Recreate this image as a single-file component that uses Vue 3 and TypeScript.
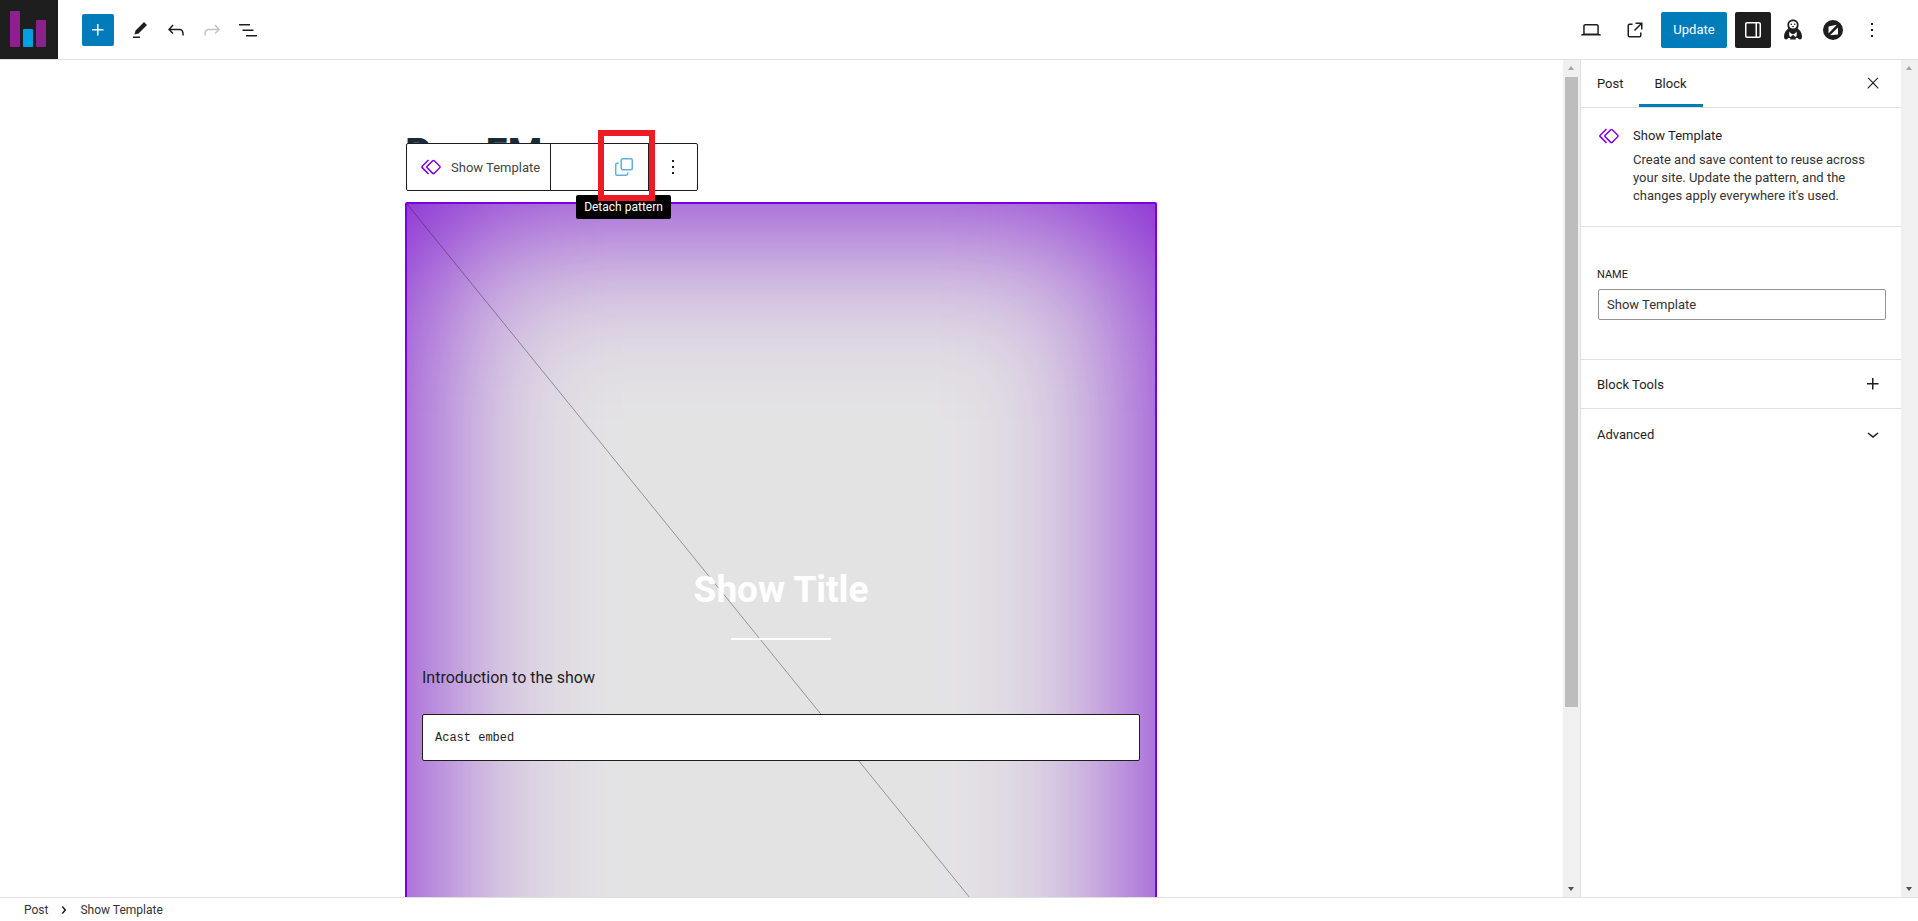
<template>
  <div class="editor">
    <header class="topbar">
      <div class="left">
        <div class="logo">
          <span class="bar bar-a"></span>
          <span class="bar bar-b"></span>
          <span class="bar bar-c"></span>
        </div>
        <button class="add">
          <svg viewBox="0 0 24 24" width="24" height="24"><path :d="icons.plus" /></svg>
        </button>
        <div class="tools">
          <button v-for="tool in leftTools" :key="tool.name" class="icon-btn" :class="{ off: tool.off }">
            <svg viewBox="0 0 24 24" width="24" height="24"><path :d="tool.d" /></svg>
          </button>
        </div>
      </div>
      <div class="right">
        <button class="icon-btn">
          <svg viewBox="0 0 24 24" width="24" height="24"><path :d="icons.laptop" /></svg>
        </button>
        <button class="icon-btn">
          <svg viewBox="0 0 24 24" width="24" height="24"><path :d="icons.external" /></svg>
        </button>
        <button class="update">Update</button>
        <button class="icon-btn dark">
          <svg viewBox="0 0 24 24" width="24" height="24"><path :d="icons.sidebar" /></svg>
        </button>
        <button class="icon-btn tight">
          <svg viewBox="0 0 24 24" width="24" height="24">
            <path d="M12 1.500c-3.300 0-5.600 2.400-5.600 5.600 0 1.400.3 2.500.9 3.500C5 12.300 3 15 3 18.500c0 1.700.8 3 2 3s1.700-.9 2.300-1.500h2.200c-.3 1-.9 1.500-.9 1.500h6.800s-.6-.5-.9-1.500h2.200c.6.600 1.100 1.500 2.300 1.500s2-1.300 2-3c0-3.500-2-6.200-4.300-7.900.6-1 .9-2.100.9-3.500C17.600 3.900 15.300 1.500 12 1.500Z" />
            <ellipse cx="12" cy="6.800" rx="3.900" ry="3.600" fill="#fff" />
            <circle cx="10.300" cy="6.200" r=".8" />
            <circle cx="13.700" cy="6.200" r=".8" />
            <path d="M10.800 7.900h2.400L12 9.500Z" />
            <path d="M8.500 13.500c1 2 2.200 2.700 3.500 2.700s2.500-.7 3.500-2.700c.5 1.500.4 3.500-.3 5.300h-1.500c.2-.8-.6-1.500-1.700-1.500s-1.900.7-1.700 1.500H8.800c-.7-1.800-.8-3.800-.3-5.300Z" fill="#fff" />
          </svg>
        </button>
        <button class="icon-btn tight">
          <svg viewBox="0 0 24 24" width="24" height="24">
            <circle cx="12" cy="12" r="10" />
            <path d="M7.500 8.500 15.800 6.800 7.500 15.500Z" fill="#fff" />
            <path d="M17 9.500V16.500L9 17.300Z" fill="#fff" />
          </svg>
        </button>
        <button class="icon-btn last">
          <svg viewBox="0 0 24 24" width="24" height="24"><path :d="icons.more" /></svg>
        </button>
      </div>
    </header>

    <div class="body">
      <main class="canvas">
        <div class="canvas-scroll">
          <div class="content">
            <h1 class="post-title">Pop FM</h1>
            <section class="cover">
              <svg class="diagonal" viewBox="0 0 100 100" preserveAspectRatio="none">
                <line x1="0" y1="0" x2="100" y2="100" vector-effect="non-scaling-stroke" />
              </svg>
              <div class="cover-inner">
                <h2 class="show-title">Show Title</h2>
                <hr class="rule" />
                <p class="intro">Introduction to the show</p>
                <div class="embed">Acast embed</div>
              </div>
            </section>

            <div class="block-toolbar">
              <div class="tb-group tb-name">
                <svg class="pattern-icon" viewBox="0 0 24 24" width="24" height="24"><path :d="icons.symbol" /></svg>
                <span>Show Template</span>
              </div>
              <div class="tb-group tb-detach">
                <svg viewBox="0 0 24 24" width="24" height="24">
                  <rect x="9.200" y="3.700" width="11.100" height="11.100" rx="1.500" />
                  <path d="M6.700 8.200H5.200a1.500 1.500 0 0 0-1.500 1.500v9a1.500 1.500 0 0 0 1.500 1.500h9a1.500 1.500 0 0 0 1.500-1.500v-1.200" />
                </svg>
              </div>
              <div class="tb-group tb-more">
                <svg viewBox="0 0 24 24" width="24" height="24"><path :d="icons.more" /></svg>
              </div>
            </div>
            <div class="tooltip">Detach pattern</div>
            <div class="highlight"></div>
          </div>
        </div>
        <div class="scrollbar">
          <span class="arrow up"></span>
          <span class="thumb"></span>
          <span class="arrow down"></span>
        </div>
      </main>

      <aside class="sidebar">
        <div class="panel">
          <div class="tabs">
            <span class="tab">Post</span>
            <span class="tab active">Block</span>
            <svg class="close" viewBox="0 0 24 24" width="18" height="18"><path :d="icons.close" /></svg>
          </div>
          <div class="card">
            <svg class="pattern-icon" viewBox="0 0 24 24" width="24" height="24"><path :d="icons.symbol" /></svg>
            <div>
              <h3>Show Template</h3>
              <p>Create and save content to reuse across your site. Update the pattern, and the changes apply everywhere it's used.</p>
            </div>
          </div>
          <div class="name-section">
            <label>Name</label>
            <input type="text" value="Show Template" />
          </div>
          <div class="row">
            <span>Block Tools</span>
            <svg viewBox="0 0 24 24" width="24" height="24"><path :d="icons.plus" /></svg>
          </div>
          <div class="row plain">
            <span>Advanced</span>
            <svg viewBox="0 0 24 24" width="24" height="24"><path :d="icons.chevronDown" /></svg>
          </div>
        </div>
        <div class="scrollbar empty">
          <span class="arrow up"></span>
          <span class="arrow down"></span>
        </div>
      </aside>
    </div>

    <footer class="crumbs">
      <span>Post</span>
      <svg viewBox="0 0 24 24" width="24" height="24"><path :d="icons.chevronRight" /></svg>
      <span>Show Template</span>
    </footer>
  </div>
</template>

<script setup lang="ts">
const icons = {
  plus: 'M11 12.5V17.5H12.5V12.5H17.5V11H12.5V6H11V11H6V12.5H11Z',
  pencil: 'm19 7-3-3-8.500 8.500-1 4 4-1L19 7Zm-7 11.500H5V20h7v-1.500Z',
  undo: 'M18.300 11.700c-.6-.6-1.400-.9-2.300-.9H6.700l2.900-3.300-1.100-1-4.500 5L8.500 16l1-1-2.700-2.700H16c.5 0 .9.2 1.300.5 1 1 1 3.400 1 4.500v.3h1.500v-.2c0-1.500 0-4.300-1.500-5.700z',
  redo: 'M15.600 6.500l-1.100 1 2.900 3.300H8c-.9 0-1.700.3-2.300.9-1.400 1.500-1.400 4.200-1.400 5.600v.2h1.500v-.3c0-1.100 0-3.500 1-4.500.3-.3.7-.5 1.300-.5h9.200L14.500 15l1.100 1.100 4.600-4.600-4.600-5z',
  list: 'M3 6h11v1.500H3V6Zm3.500 5.500h11V13h-11v-1.500ZM21 17H10v1.500h11V17Z',
  laptop: 'M20.500 16h-.7V8c0-1.100-.9-2-2-2H6.200c-1.100 0-2 .9-2 2v8h-.7c-.8 0-1.500.7-1.500 1.500h20c0-.8-.7-1.500-1.500-1.500zM5.700 8c0-.3.2-.5.5-.5h11.600c.3 0 .5.2.5.5v7.600H5.700V8z',
  external: 'M19.500 4.500h-7V6h4.440l-5.970 5.970 1.060 1.060L18 7.060v4.440h1.500v-7Zm-13 1a2 2 0 0 0-2 2v10a2 2 0 0 0 2 2h10a2 2 0 0 0 2-2v-3H17v3a.5.5 0 0 1-.5.5h-10a.5.5 0 0 1-.5-.5v-10a.5.5 0 0 1 .5-.5h3V5.500h-3Z',
  sidebar: 'M18 4H6c-1.100 0-2 .9-2 2v12c0 1.100.9 2 2 2h12c1.100 0 2-.9 2-2V6c0-1.100-.9-2-2-2zM6 5.500h8.500v13H6c-.3 0-.5-.2-.5-.5V6c0-.3.2-.5.5-.5zm12.500 12.500c0 .3-.2.5-.5.5h-2v-13h2c.3 0 .5.2.5.5v12z',
  more: 'M13 19h-2v-2h2v2zm0-6h-2v-2h2v2zm0-6h-2V5h2v2z',
  close: 'M13 11.800l6.100-6.300-1-1-6.100 6.200-6.100-6.200-1 1 6.100 6.300-6.500 6.700 1 1 6.500-6.600 6.500 6.600 1-1z',
  chevronDown: 'M17.500 11.600L12 16l-5.500-4.400.9-1.200L12 14l4.500-3.600 1 1.200z',
  chevronRight: 'M10.862 8.040L14.280 12.029L10.862 16.017L9.723 15.040L12.305 12.029L9.723 9.017L10.862 8.040Z',
  symbol: 'M21.300 10.800l-5.600-5.600c-.7-.7-1.800-.7-2.500 0l-5.600 5.600c-.7.7-.7 1.800 0 2.500l5.600 5.600c.3.3.8.5 1.200.5s.9-.2 1.200-.5l5.600-5.600c.8-.7.8-1.900.1-2.500zm-1 1.400l-5.600 5.600c-.1.1-.3.1-.4 0l-5.600-5.600c-.1-.1-.1-.3 0-.4l5.600-5.600s.1-.1.2-.1.100 0 .2.100l5.600 5.600c.1.100.1.300 0 .4zm-16.600-.4L10 5.500l-1-1-6.300 6.300c-.7.700-.7 1.800 0 2.500L9 19.500l1.100-1.100-6.300-6.300c-.2 0-.2-.2-.1-.3z',
}

const leftTools = [
  { name: 'edit', d: icons.pencil, off: false },
  { name: 'undo', d: icons.undo, off: false },
  { name: 'redo', d: icons.redo, off: true },
  { name: 'list', d: icons.list, off: false },
]
</script>

<style>
html,
body {
  margin: 0;
  height: 100%;
  overflow: hidden;
  background: #fff;
}
</style>

<style scoped>
.editor {
  display: flex;
  flex-direction: column;
  height: 921px;
  font-family: Roboto, "Noto Sans", sans-serif;
  font-size: 13px;
  color: #1e1e1e;
}

button {
  border: none;
  background: none;
  padding: 0;
  font-family: inherit;
}

svg {
  fill: currentColor;
  display: block;
}

/* top bar */
.topbar {
  display: flex;
  justify-content: space-between;
  align-items: center;
  height: 60px;
  flex: none;
  box-sizing: border-box;
  border-bottom: 1px solid #e0e0e0;
}

.left,
.right,
.tools {
  display: flex;
  align-items: center;
}

.logo {
  display: flex;
  align-items: flex-end;
  gap: 3px;
  box-sizing: border-box;
  width: 58px;
  height: 59px;
  padding: 0 12px 12px 10px;
  background: #1e1e1e;
}

.bar {
  width: 10px;
  border-radius: 1px;
  background: #8e1f8f;
}

.bar-a {
  height: 36px;
}

.bar-b {
  height: 18px;
  background: #00a0e3;
}

.bar-c {
  height: 27px;
}

.add {
  display: flex;
  align-items: center;
  justify-content: center;
  width: 32px;
  height: 32px;
  margin: 0 8px 0 24px;
  border-radius: 2px;
  background: #007cba;
  color: #fff;
}

.icon-btn {
  display: flex;
  align-items: center;
  justify-content: center;
  width: 36px;
  height: 36px;
  border-radius: 2px;
  color: #1e1e1e;
}

.icon-btn.off {
  color: #c4c4c4;
}

.icon-btn.dark {
  background: #1e1e1e;
  color: #fff;
  margin-right: 4px;
}

.icon-btn.tight {
  margin-right: 4px;
}

.icon-btn.last {
  margin: 0 28px 0 -1px;
}

.right .icon-btn:first-child,
.right .icon-btn:nth-child(2),
.update {
  margin-right: 8px;
}

.update {
  width: 66px;
  height: 36px;
  border-radius: 2px;
  background: #007cba;
  color: #fff;
  font-size: 13px;
}

/* main area */
.body {
  display: flex;
  flex: 1;
  min-height: 0;
}

.canvas {
  display: flex;
  flex: 1;
  min-width: 0;
  border-right: 1px solid #e0e0e0;
}

.canvas-scroll {
  flex: 1;
  min-width: 0;
  overflow: hidden;
}

.content {
  position: relative;
  width: 752px;
  margin-left: 405px;
  padding-top: 72px;
}

.post-title {
  margin: 0 0 8px;
  height: 62px;
  font-size: 40px;
  line-height: 44px;
  font-weight: 700;
  color: #1a2b38;
}

.cover {
  position: relative;
  box-sizing: border-box;
  height: 926px;
  border: 2px solid #7a00df;
  border-radius: 2px;
  background: #e4e3e4;
  box-shadow: inset 0 0 180px #7400d0;
}

.diagonal {
  position: absolute;
  inset: 0;
  width: 100%;
  height: 100%;
}

.diagonal line {
  stroke: #1e1e1e;
  stroke-opacity: 0.4;
  stroke-width: 1;
}

.cover-inner {
  position: relative;
  padding: 361px 15px 0;
}

.show-title {
  margin: 0;
  text-align: center;
  color: #fff;
  font-size: 37px;
  line-height: 50px;
  font-weight: 700;
}

.rule {
  width: 100px;
  height: 2px;
  margin: 23px auto 0;
  border: none;
  background: #fff;
}

.intro {
  margin: 26px 0 0;
  font-size: 16px;
  line-height: 24px;
  color: #1e1e1e;
}

.embed {
  box-sizing: border-box;
  display: flex;
  align-items: center;
  height: 47px;
  margin-top: 24px;
  padding-left: 12px;
  border: 1px solid #1e1e1e;
  border-radius: 2px;
  background: #fff;
  font-family: "Liberation Mono", monospace;
  font-size: 12px;
}

.block-toolbar {
  position: absolute;
  top: 83px;
  left: 1px;
  display: flex;
  box-sizing: border-box;
  height: 48px;
  border: 1px solid #1e1e1e;
  border-radius: 2px;
  background: #fff;
}

.tb-group {
  display: flex;
  align-items: center;
}

.tb-name {
  width: 144px;
  gap: 8px;
  padding-left: 12px;
  box-sizing: border-box;
  border-right: 1px solid #1e1e1e;
  font-size: 13px;
  color: #444;
}

.tb-detach {
  justify-content: center;
  width: 98px;
  padding-left: 49px;
  box-sizing: border-box;
  border-right: 1px solid #1e1e1e;
  color: #5fb0dd;
}

.tb-detach svg {
  fill: none;
  stroke: currentColor;
  stroke-width: 1.5;
}

.tb-more {
  justify-content: center;
  width: 48px;
}

.pattern-icon {
  color: #7a00df;
  flex: none;
}

.tooltip {
  position: absolute;
  top: 135px;
  left: 171px;
  width: 95px;
  height: 24px;
  border-radius: 2px;
  background: #000;
  color: #fff;
  font-size: 12px;
  line-height: 24px;
  text-align: center;
}

.highlight {
  position: absolute;
  top: 70px;
  left: 193px;
  box-sizing: border-box;
  width: 57px;
  height: 71px;
  border: 6px solid #ed1c24;
}

/* scrollbars */
.scrollbar {
  position: relative;
  flex: none;
  width: 17px;
  background: #f0f0f0;
}

.thumb {
  position: absolute;
  top: 17px;
  left: 2px;
  width: 13px;
  height: 630px;
  background: #bdbdbd;
}

.arrow {
  position: absolute;
  left: 5px;
  width: 0;
  height: 0;
  border-left: 3.500px solid transparent;
  border-right: 3.500px solid transparent;
}

.arrow.up {
  top: 6px;
  border-bottom: 4px solid #a3a3a3;
}

.arrow.down {
  bottom: 6px;
  border-top: 4px solid #505050;
}

/* sidebar */
.sidebar {
  display: flex;
  flex: none;
  width: 337px;
}

.panel {
  flex: 1;
  min-width: 0;
}

.tabs {
  position: relative;
  display: flex;
  box-sizing: border-box;
  height: 48px;
  border-bottom: 1px solid #e0e0e0;
}

.tab {
  display: flex;
  align-items: center;
  justify-content: center;
  height: 47px;
  padding: 0 16px;
  color: #1e1e1e;
}

.tab.active {
  margin-left: -1px;
  box-shadow: inset 0 -3px 0 #007cba;
}

.close {
  position: absolute;
  top: 14px;
  right: 19px;
}

.card {
  display: flex;
  gap: 12px;
  box-sizing: border-box;
  height: 119px;
  padding: 16px 16px 0 16px;
  border-bottom: 1px solid #e0e0e0;
}

.card h3 {
  margin: 0 0 3px;
  font-size: 13px;
  line-height: 24px;
  font-weight: 400;
  color: #1e1e1e;
}

.card p {
  margin: 0;
  font-size: 13px;
  line-height: 18px;
  color: #333;
}

.name-section {
  box-sizing: border-box;
  height: 133px;
  padding: 40px 15px 0 17px;
  border-bottom: 1px solid #e0e0e0;
}

.name-section label {
  display: block;
  margin-bottom: 6px;
  margin-left: -1px;
  font-size: 11px;
  line-height: 16px;
  text-transform: uppercase;
  color: #1e1e1e;
}

.name-section input {
  display: block;
  box-sizing: border-box;
  width: 100%;
  height: 31px;
  padding: 0 8px;
  border: 1px solid #949494;
  border-radius: 2px;
  font-family: inherit;
  font-size: 13px;
  color: #333;
  outline: none;
}

.row {
  display: flex;
  align-items: center;
  justify-content: space-between;
  box-sizing: border-box;
  height: 49px;
  padding: 0 16px 0 16px;
  border-bottom: 1px solid #e0e0e0;
  font-weight: 400;
}

.row.plain {
  border-bottom: none;
  height: 50px;
}

/* footer */
.crumbs {
  display: flex;
  align-items: center;
  box-sizing: border-box;
  height: 24px;
  flex: none;
  padding-left: 24px;
  border-top: 1px solid #e0e0e0;
  font-size: 12px;
  color: #333;
}

.crumbs svg {
  width: 24px;
  height: 24px;
  margin: 0 4px;
  color: #1e1e1e;
}
</style>
